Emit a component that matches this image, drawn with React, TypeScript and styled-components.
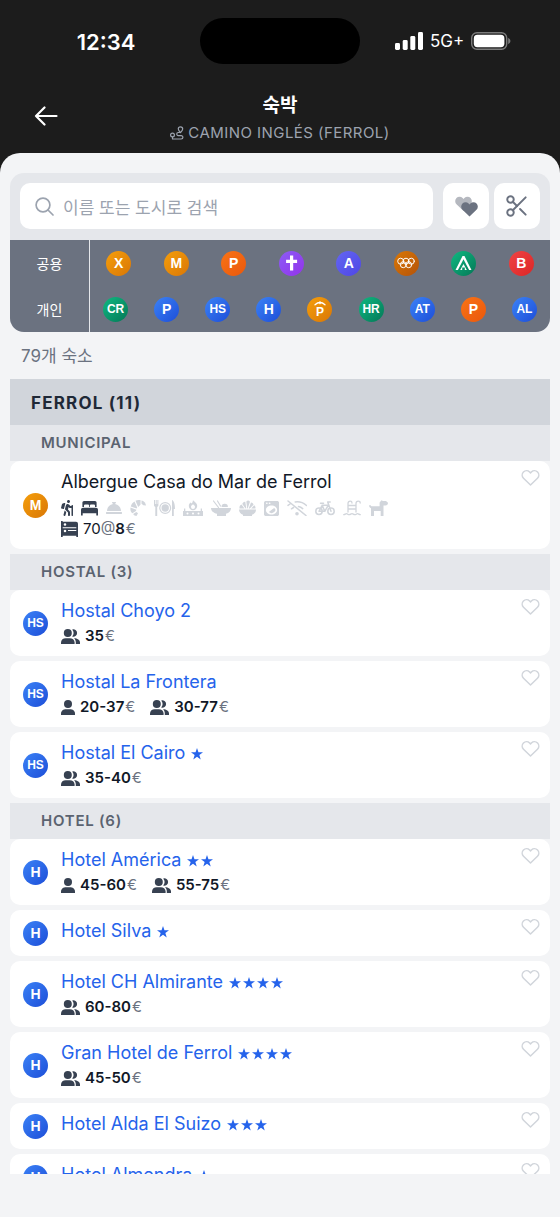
import React from "react";
import styled, { createGlobalStyle } from "styled-components";
import { FaHiking, FaConciergeBell } from "react-icons/fa";
import { MdLocalLaundryService } from "react-icons/md";
import { Scissors } from "lucide-react";

const GlobalStyle = createGlobalStyle`
  *, *::before, *::after { box-sizing: border-box; }
  body {
    margin: 0;
    background: #1c1c1c;
    font-family: Inter, "Noto Sans CJK KR", sans-serif;
    color: #111827;
  }
  button { font: inherit; padding: 0; border: 0; background: none; cursor: pointer; }
  svg { display: block; flex: none; }
  h1, h2, h3, p, ul { margin: 0; padding: 0; }
  ul { list-style: none; }
`;

const Screen = styled.div`
  display: flex;
  flex-direction: column;
  height: 100vh;
`;

/* Status bar */

const StatusBar = styled.div`
  display: grid;
  grid-template-columns: 1fr 160px 1fr;
  align-items: center;
  padding: 18px 0 21px;
  color: #fff;
`;

const Clock = styled.time`
  justify-self: center;
  padding: 2px 0 0 12px;
  font-size: 22px;
  line-height: 28px;
  font-weight: 600;
`;

const Island = styled.div`
  height: 46px;
  border-radius: 23px;
  background: #000;
`;

const Signals = styled.div`
  display: flex;
  align-items: center;
  gap: 7px;
  padding-left: 35px;
  font-size: 17px;
  line-height: 20px;
  font-weight: 400;
`;

/* Header */

const Header = styled.header`
  display: grid;
  grid-template-columns: 92px 1fr 92px;
  align-items: center;
  padding-bottom: 9px;
`;

const BackButton = styled.button`
  display: flex;
  justify-content: center;
  padding-top: 2px;
  color: #fff;
`;

const Heading = styled.div`
  display: flex;
  flex-direction: column;
  align-items: center;
  gap: 3px;
  padding-top: 8px;
`;

const Title = styled.h1`
  font-size: 19px;
  line-height: 26px;
  font-weight: 700;
  color: #fff;
`;

const Subtitle = styled.p`
  display: flex;
  align-items: center;
  gap: 4px;
  font-size: 15px;
  line-height: 22px;
  letter-spacing: 0.03em;
  color: #9ca3af;
`;

/* Sheet */

const Sheet = styled.main`
  flex: 1;
  min-height: 0;
  display: flex;
  flex-direction: column;
  padding: 20px 10px 43px;
  border-radius: 20px 20px 0 0;
  background: #f3f4f6;
`;

const Panel = styled.section`
  flex: none;
  overflow: hidden;
  border-radius: 14px;
  background: #e5e7eb;
`;

const SearchRow = styled.div`
  display: flex;
  gap: 5px;
  padding: 10px 10px 11px;
`;

const SearchBox = styled.label`
  flex: 1;
  min-width: 0;
  display: flex;
  align-items: center;
  gap: 9px;
  height: 46px;
  margin-right: 5px;
  padding: 0 15px;
  border-radius: 10px;
  background: #fff;
  color: #9ca3af;
`;

const SearchInput = styled.input`
  flex: 1;
  min-width: 0;
  padding: 3px 0 0;
  border: 0;
  outline: 0;
  background: none;
  font: inherit;
  font-size: 17px;
  line-height: 26px;
  color: #111827;
  &::placeholder { color: #9ca3af; opacity: 1; }
  &::-webkit-search-cancel-button { display: none; }
`;

const ToolButton = styled.button`
  display: flex;
  align-items: center;
  justify-content: center;
  width: 46px;
  height: 46px;
  border-radius: 10px;
  background: #fff;
  color: #6b7280;
`;

const FilterRow = styled.div`
  display: flex;
  align-items: stretch;
  height: 46px;
  background: #6b7280;
`;

const FilterLabel = styled.div`
  display: flex;
  align-items: center;
  justify-content: center;
  width: 80px;
  border-right: 1px solid #e5e7eb;
  font-size: 14px;
  font-weight: 400;
  color: #fff;
`;

const FilterItems = styled.div`
  flex: 1;
  display: flex;
  align-items: center;
  justify-content: space-around;
`;

type Tone = "amber" | "orange" | "purple" | "indigo" | "brown" | "green" | "red" | "blue";

const tones: Record<Tone, string> = {
  amber: "#f59e0b, #d97706",
  orange: "#f97316, #ea580c",
  purple: "#8b5cf6, #9333ea",
  indigo: "#6366f1, #4f46e5",
  brown: "#d97706, #b45309",
  green: "#10b981, #047857",
  red: "#ef4444, #dc2626",
  blue: "#3b82f6, #1d4ed8",
};

const Badge = styled.span<{ $tone: Tone; $small?: boolean }>`
  flex: none;
  display: flex;
  align-items: center;
  justify-content: center;
  width: 25px;
  height: 25px;
  border-radius: 50%;
  background: linear-gradient(135deg, ${(p) => tones[p.$tone]});
  color: #fff;
  font-family: "Liberation Sans", Arial, sans-serif;
  font-size: ${(p) => (p.$small ? 12 : 14)}px;
  line-height: 16px;
  font-weight: 700;
`;

const Count = styled.p`
  flex: none;
  padding: 12px 11px 11px;
  font-size: 17px;
  line-height: 24px;
  color: #6b7280;
`;

/* List */

const List = styled.div`
  flex: 1;
  min-height: 0;
  overflow-y: auto;
  scrollbar-width: none;
`;

const CityHeading = styled.h2`
  padding: 12px 21px 10px;
  background: #d1d5db;
  font-size: 17px;
  line-height: 24px;
  font-weight: 700;
  letter-spacing: 0.07em;
  color: #1f2937;
`;

const KindHeading = styled.h3`
  padding: 8px 31px;
  background: #e5e7eb;
  font-size: 15px;
  line-height: 20px;
  font-weight: 600;
  letter-spacing: 0.05em;
  color: #5b6370;
`;

const Card = styled.li`
  display: flex;
  align-items: flex-start;
  gap: 13px;
  min-height: 46px;
  margin-bottom: 5px;
  padding: 8px 9px 10px 13px;
  border-radius: 10px;
  background: #fff;
  > ${Badge} { align-self: center; margin-bottom: -2px; }
`;

const Details = styled.div`
  flex: 1;
  min-width: 0;
`;

const Name = styled.div`
  display: flex;
  align-items: center;
  gap: 6px;
  padding-top: 1px;
  font-size: 18px;
  line-height: 24px;
  font-weight: 400;
`;

const NameLink = styled.a`
  color: #2563eb;
  text-decoration: none;
`;

const Stars = styled.span`
  display: flex;
  gap: 2px;
  padding-top: 2px;
  color: #2563eb;
`;

const Facilities = styled.div`
  display: flex;
  align-items: center;
  gap: 8px;
  height: 22px;
  margin-top: 3px;
  color: #d1d5db;
`;

const Available = styled.span`
  display: flex;
  gap: 8px;
  color: #374151;
`;

const Hiker = styled(FaHiking)`
  width: 12px;
  height: 16px;
`;

const Prices = styled.div<{ $tight?: boolean }>`
  display: flex;
  gap: 15px;
  margin-top: ${(p) => (p.$tight ? 0 : 3)}px;
`;

const Price = styled.span`
  display: flex;
  align-items: center;
  gap: 5px;
  font-size: 15px;
  line-height: 20px;
  color: #6b7280;
  b { margin-right: 1px; font-weight: 600; color: #111827; }
  em { font-style: normal; color: #111827; }
  svg { color: #374151; }
`;

const Favorite = styled.button`
  display: flex;
  color: #d1d5db;
`;

/* Drawings */

const Svg = ({ w, h = 16, children }: { w: number; h?: number; children: React.ReactNode }) => (
  <svg width={w} height={h} viewBox={`0 0 ${w} ${h}`} fill="currentColor" aria-hidden="true">
    {children}
  </svg>
);

const line = {
  fill: "none",
  stroke: "currentColor",
  strokeLinecap: "round" as const,
  strokeLinejoin: "round" as const,
};

const Signal = () => (
  <Svg w={28} h={18}>
    <rect x="0" y="11" width="5" height="7" rx="1.4" />
    <rect x="7.7" y="8" width="5" height="10" rx="1.4" />
    <rect x="15.3" y="4" width="5" height="14" rx="1.4" />
    <rect x="23" y="0" width="5" height="18" rx="1.4" />
  </Svg>
);

const Battery = () => (
  <Svg w={40} h={18}>
    <rect x="0.7" y="0.7" width="35" height="16.6" rx="5.2" fill="none" stroke="#7b7b7b" strokeWidth="1.4" />
    <rect x="2.8" y="2.8" width="30.6" height="12.4" rx="3.6" />
    <path d="M37.2 6v6c1.3-.5 2.2-1.6 2.2-3s-.9-2.5-2.2-3z" fill="#7b7b7b" />
  </Svg>
);

const BackArrow = () => (
  <Svg w={24} h={20}>
    <path {...line} strokeWidth="2.2" d="M10.500 1.500 2 10l8.500 8.500M2 10h20.500" />
  </Svg>
);

const Magnifier = () => (
  <Svg w={19} h={19}>
    <g {...line} strokeWidth="1.700">
      <circle cx="8" cy="8" r="6.900" />
      <path d="M13 13l5 5" />
    </g>
  </Svg>
);

const Route = () => (
  <Svg w={14} h={14}>
    <g {...line} strokeWidth="1.2">
      <circle cx="2.5" cy="9" r="1.9" />
      <path d="M2.5 11v2h8.7a1.7 1.7 0 0 0 0-3.4H8.3a1.500 1.500 0 0 1 0-3.100h1.200" />
      <path d="M10.500 6.600C9 5 8.300 4.200 8.300 3a2.200 2.200 0 0 1 4.400 0c0 1.200-.7 2-2.200 3.600z" />
    </g>
  </Svg>
);

const HEART = "M8.500 15 1.500 8.200A4.300 4.300 0 0 1 7.600 2l.9.9.9-.9a4.300 4.300 0 0 1 6.100 6.200z";

const Hearts = () => (
  <Svg w={24} h={22}>
    <path d={HEART} opacity="0.5" transform="translate(1 1)" />
    <path d={HEART} transform="translate(7 6.500)" />
  </Svg>
);

const HeartOutline = () => (
  <Svg w={20} h={18}>
    <path {...line} strokeWidth="1.500" transform="translate(1 1)" d={HEART} />
  </Svg>
);

const Cross = () => (
  <Svg w={13} h={16}>
    <path d="M5 .5h3.200v4.300h3.900V8H8.200v7.500H5V8H1.100V4.800H5z" />
  </Svg>
);

const Rings = () => (
  <Svg w={18} h={12}>
    <g {...line} strokeWidth="1">
      <circle cx="3.700" cy="4.200" r="3" />
      <circle cx="9" cy="4.200" r="3" />
      <circle cx="14.300" cy="4.200" r="3" />
      <circle cx="6.300" cy="7.700" r="3" />
      <circle cx="11.700" cy="7.700" r="3" />
    </g>
  </Svg>
);

const Tent = () => (
  <Svg w={17} h={15}>
    <path d="M7.500 0h2L16.500 14h-2.400L8.500 3.200 2.900 14H.5z" />
    <path d="M8.500 8 11.800 14H9.800v-2.500H7.200V14H5.200z" />
  </Svg>
);

const RoofP = styled.span`
  display: flex;
  flex-direction: column;
  align-items: center;
  font-size: 12px;
  line-height: 12px;
`;

const Roof = () => (
  <Svg w={12} h={5}>
    <g {...line} strokeWidth="1.300">
      <path d="M1 3.700Q3.500 1.500 6 1.500t5 2.200M6 .7v2" />
    </g>
  </Svg>
);

const Star = () => (
  <Svg w={12} h={12}>
    <path d="M6 0l1.450 4.300H12L8.350 7l1.380 4.500L6 8.750 2.270 11.500 3.650 7 0 4.300h4.550z" />
  </Svg>
);

const Person = () => (
  <Svg w={14} h={15}>
    <circle cx="7" cy="4" r="4" />
    <path d="M0 15v-1.500C0 10.800 2.500 9.300 5 9.300h4c2.500 0 5 1.500 5 4.200V15z" />
  </Svg>
);

const People = () => (
  <Svg w={19} h={15}>
    <circle cx="6.800" cy="4" r="4" />
    <path d="M0 15v-1.500c0-2.700 2.300-4.200 4.700-4.200h4.200c2.400 0 4.700 1.500 4.700 4.200V15z" />
    <path d="M11.200.5a3.700 3.700 0 1 1 0 7 5.600 5.600 0 0 0 0-7z" />
    <path d="M13 9.300c3.400 0 6 1.600 6 4.300V15h-4.200v-1.500c0-1.700-.7-3.200-1.800-4.200z" />
  </Svg>
);

const Bed = () => (
  <Svg w={17}>
    <path
      fillRule="evenodd"
      d="M3 1h11a1.600 1.600 0 0 1 1.600 1.600V7H14V5.600A1.100 1.100 0 0 0 12.900 4.500H10A1.100 1.100 0 0 0 8.900 5.600V7h-.8V5.600A1.100 1.100 0 0 0 7 4.500H4.100A1.100 1.100 0 0 0 3 5.600V7H1.400V2.600A1.600 1.600 0 0 1 3 1z"
    />
    <path d="M2 7.800h13a2 2 0 0 1 2 2V15.500h-1.700V13.300H1.700v2.200H0V9.800a2 2 0 0 1 2-2z" />
  </Svg>
);

const Bunk = () => (
  <Svg w={17} h={16}>
    <path
      fillRule="evenodd"
      d="M0 0h1.700v.8H15a2 2 0 0 1 2 2V16h-1.700v-1.300H1.700V16H0zM1.700 6.200v1h13.600v-1zM4 2.200a1.300 1.300 0 1 0 0 2.600 1.300 1.300 0 0 0 0-2.600zM4 8.700a1.300 1.300 0 1 0 0 2.600 1.300 1.300 0 0 0 0-2.600zM7 9v.9h8.300V9z"
    />
  </Svg>
);

const Croissant = () => (
  <Svg w={16}>
    <path d="M11.500.4C14 .8 15.700 2.800 16 5.600l-2.600-.3-1.900-1.500z" />
    <path d="M5.500.8C7 0 9 0 10.600.3l-.2 4.500L8.200 7z" />
    <path d="M4.500 1.400 7.200 7.400 6.600 8.600.8 6.500c.5-2.200 1.800-4.100 3.700-5.100z" />
    <path d="M.5 7.600 6.400 9.700 5.900 11l-3.500 2.200C.8 12 .1 10 .5 7.600z" />
    <path d="M3.100 14 6.300 11.900 8 13.200 6.500 16C5 16 3.900 15.200 3.100 14z" />
  </Svg>
);

const Plate = () => (
  <Svg w={21}>
    <path d="M0 0h1v4h.7V0h1v4h.7V0h1v5c0 1-.5 1.600-1.200 1.900V16H1.300V6.900C.5 6.600 0 6 0 5z" />
    <path d="M18 16V0c1.800.6 3 3.600 3 9h-1.200v7z" />
    <circle cx="11.200" cy="8" r="3.700" />
    <circle cx="11.200" cy="8" r="5.400" fill="none" stroke="currentColor" strokeWidth="1.200" />
  </Svg>
);

const Stove = () => (
  <Svg w={20}>
    <path
      fillRule="evenodd"
      d="M10 0c.3 1.300 4.200 2.600 4.200 6A4.200 4.200 0 0 1 10 10.200 4.200 4.200 0 0 1 5.800 6c0-1.700 1-2.800 1.900-3.500l.8 1C9.400 2.800 9.900 1.600 10 0zm0 4.300C8.800 5.200 8 5.800 8 6.900a2 2 0 0 0 4 0c0-1.100-.8-1.700-2-2.600z"
    />
    <path d="M1 8.500h1.300V11h15.400V8.500H19V11h1v5H0v-5h1z" />
    <g fill="#fff">
      <circle cx="4.500" cy="13.500" r="1" />
      <circle cx="10" cy="13.500" r="1" />
      <circle cx="15.500" cy="13.500" r="1" />
    </g>
  </Svg>
);

const SoupBowl = () => (
  <Svg w={20}>
    <path d="M0 8h20c0 3-2 4.800-5 5.800V16H6v-2.200C2.500 12.800 0 11 0 8z" />
    <path d="M10.500 7a3.200 3.200 0 0 1 6.400 0z" />
    <g {...line} strokeWidth="1.200">
      <path d="M2.500 1 7.500 7.500M6.500 1l3 5" />
    </g>
  </Svg>
);

const Salad = () => (
  <Svg w={17}>
    <path d="M0 9.500h17c0 2.700-1.500 4.500-4 5.300V16H4v-1.200c-2.500-.8-4-2.600-4-5.300z" />
    <path d="M.5 8.500C.3 6.500 1 5 2.500 4.600L5.500 8.500zM3.300 4c.3-1.500 1.500-2.500 3-2.300L7.300 8.500H6.500zM7.300 1.500a2.500 2.500 0 0 1 3.700.3L8.700 8.500h-.5zM12 2.500c1.500 0 2.500 1 2.500 2.300L10.800 8.500H9.700zM15.200 5.200c1 .7 1.500 2 1.200 3.300h-4.200z" />
  </Svg>
);

const WifiOff = () => (
  <Svg w={20}>
    <circle cx="10" cy="13.800" r="1.800" />
    <g {...line} strokeWidth="1.500">
      <path d="M1 1l18 14.500M8.200 2C12.500 1.400 16.500 2.800 19.500 5.500M1 5.400 3 4M11.500 6.600c1.600.3 3 1 4.200 2M4.500 8.800 6.500 7.500" />
    </g>
  </Svg>
);

const Bike = () => (
  <Svg w={20}>
    <g {...line} strokeWidth="1.500">
      <circle cx="4" cy="11.300" r="3.200" />
      <circle cx="16" cy="11.300" r="3.200" />
      <path d="M4 11.300 7.200 5.300h6M7.200 5.300l2.600 6L13.200 5.300M16 11.300 12.700 2h2.500M5.500 3.200h3M4 11.300h5.800" />
    </g>
  </Svg>
);

const Pool = () => (
  <Svg w={18}>
    <g {...line} strokeWidth="1.300">
      <path d="M5 12V3.500A2.300 2.300 0 0 1 7.300 1.200C8.500 1.200 9 2 9 3M13 12V3.500a2.300 2.300 0 0 1 2.300-2.300c1.200 0 1.900.8 1.900 1.800M5 5.500h8M5 9h8" />
      <path d="M.7 14.700c1.400 0 1.700-1 2.800-1s1.400 1 2.700 1 1.700-1 2.800-1 1.500 1 2.800 1 1.600-1 2.700-1 1.500 1 2.800 1" />
    </g>
  </Svg>
);

const Dog = () => (
  <Svg w={19}>
    <path d="M0 5.500 1.200 5l1.200 1.300h8.200V2.500L12.500.2 14 1h3l2 1.800c0 1.700-1 2.700-2.500 2.700H14.500V16h-2.800v-5H5v5H2V8.200C.9 7.800.2 6.800 0 5.500z" />
  </Svg>
);

/* Data */

type FilterEntry = { name: string; tone: Tone; icon?: React.ReactNode };

const publicKinds: FilterEntry[] = [
  { name: "X", tone: "amber" },
  { name: "M", tone: "amber" },
  { name: "P", tone: "orange" },
  { name: "Parroquial", tone: "purple", icon: <Cross /> },
  { name: "A", tone: "indigo" },
  { name: "Deportivo", tone: "brown", icon: <Rings /> },
  { name: "Camping", tone: "green", icon: <Tent /> },
  { name: "B", tone: "red" },
];

const privateKinds: FilterEntry[] = [
  { name: "CR", tone: "green" },
  { name: "P", tone: "blue" },
  { name: "HS", tone: "blue" },
  { name: "H", tone: "blue" },
  { name: "Pensión", tone: "amber", icon: <RoofP><Roof />P</RoofP> },
  { name: "HR", tone: "green" },
  { name: "AT", tone: "blue" },
  { name: "P", tone: "orange" },
  { name: "AL", tone: "blue" },
];

type Place = { name: string; stars?: number; single?: string; double?: string };

const hostals: Place[] = [
  { name: "Hostal Choyo 2", double: "35" },
  { name: "Hostal La Frontera", single: "20-37", double: "30-77" },
  { name: "Hostal El Cairo", stars: 1, double: "35-40" },
];

const hotels: Place[] = [
  { name: "Hotel América", stars: 2, single: "45-60", double: "55-75" },
  { name: "Hotel Silva", stars: 1 },
  { name: "Hotel CH Almirante", stars: 4, double: "60-80" },
  { name: "Gran Hotel de Ferrol", stars: 4, double: "45-50" },
  { name: "Hotel Alda El Suizo", stars: 3 },
  { name: "Hotel Almendra", stars: 1 },
];

const Filters = ({ label, entries }: { label: string; entries: FilterEntry[] }) => (
  <FilterRow role="group" aria-label={label}>
    <FilterLabel>{label}</FilterLabel>
    <FilterItems>
      {entries.map((e, i) => (
        <button key={i} type="button" aria-label={e.name}>
          <Badge $tone={e.tone} $small={!e.icon && e.name.length > 1}>
            {e.icon ?? e.name}
          </Badge>
        </button>
      ))}
    </FilterItems>
  </FilterRow>
);

const FavoriteButton = () => (
  <Favorite type="button" aria-label="즐겨찾기">
    <HeartOutline />
  </Favorite>
);

const PlaceCard = ({ place, code }: { place: Place; code: string }) => (
  <Card>
    <Badge $tone="blue" $small={code.length > 1}>{code}</Badge>
    <Details>
      <Name>
        <NameLink href="#">{place.name}</NameLink>
        {place.stars && (
          <Stars>
            {Array.from({ length: place.stars }, (_, i) => <Star key={i} />)}
          </Stars>
        )}
      </Name>
      {place.double && (
        <Prices>
          {place.single && (
            <Price><Person /><span><b>{place.single}</b>€</span></Price>
          )}
          <Price><People /><span><b>{place.double}</b>€</span></Price>
        </Prices>
      )}
    </Details>
    <FavoriteButton />
  </Card>
);

export default function App() {
  return (
    <>
      <GlobalStyle />
      <Screen>
        <StatusBar>
          <Clock>12:34</Clock>
          <Island />
          <Signals>
            <Signal />
            5G+
            <Battery />
          </Signals>
        </StatusBar>
        <Header>
          <BackButton type="button" aria-label="뒤로"><BackArrow /></BackButton>
          <Heading>
            <Title>숙박</Title>
            <Subtitle><Route />CAMINO INGLÉS (FERROL)</Subtitle>
          </Heading>
        </Header>
        <Sheet>
          <Panel>
            <SearchRow>
              <SearchBox>
                <Magnifier />
                <SearchInput type="search" placeholder="이름 또는 도시로 검색" aria-label="이름 또는 도시로 검색" />
              </SearchBox>
              <ToolButton type="button" aria-label="즐겨찾기"><Hearts /></ToolButton>
              <ToolButton type="button" aria-label="자르기"><Scissors size={26} strokeWidth={1.8} /></ToolButton>
            </SearchRow>
            <Filters label="공용" entries={publicKinds} />
            <Filters label="개인" entries={privateKinds} />
          </Panel>
          <Count>79개 숙소</Count>
          <List>
            <CityHeading>FERROL (11)</CityHeading>
            <KindHeading>MUNICIPAL</KindHeading>
            <ul>
              <Card>
                <Badge $tone="amber">M</Badge>
                <Details>
                  <Name>Albergue Casa do Mar de Ferrol</Name>
                  <Facilities>
                    <Available>
                      <Hiker viewBox="0 0 384 512" />
                      <Bed />
                    </Available>
                    <FaConciergeBell size={16} />
                    <Croissant />
                    <Plate />
                    <Stove />
                    <SoupBowl />
                    <Salad />
                    <MdLocalLaundryService size={15} viewBox="4 2 16 20" preserveAspectRatio="none" />
                    <WifiOff />
                    <Bike />
                    <Pool />
                    <Dog />
                  </Facilities>
                  <Prices $tight>
                    <Price><Bunk /><span><em>70</em>@<b>8</b>€</span></Price>
                  </Prices>
                </Details>
                <FavoriteButton />
              </Card>
            </ul>
            <KindHeading>HOSTAL (3)</KindHeading>
            <ul>
              {hostals.map((p) => <PlaceCard key={p.name} place={p} code="HS" />)}
            </ul>
            <KindHeading>HOTEL (6)</KindHeading>
            <ul>
              {hotels.map((p) => <PlaceCard key={p.name} place={p} code="H" />)}
            </ul>
          </List>
        </Sheet>
      </Screen>
    </>
  );
}
